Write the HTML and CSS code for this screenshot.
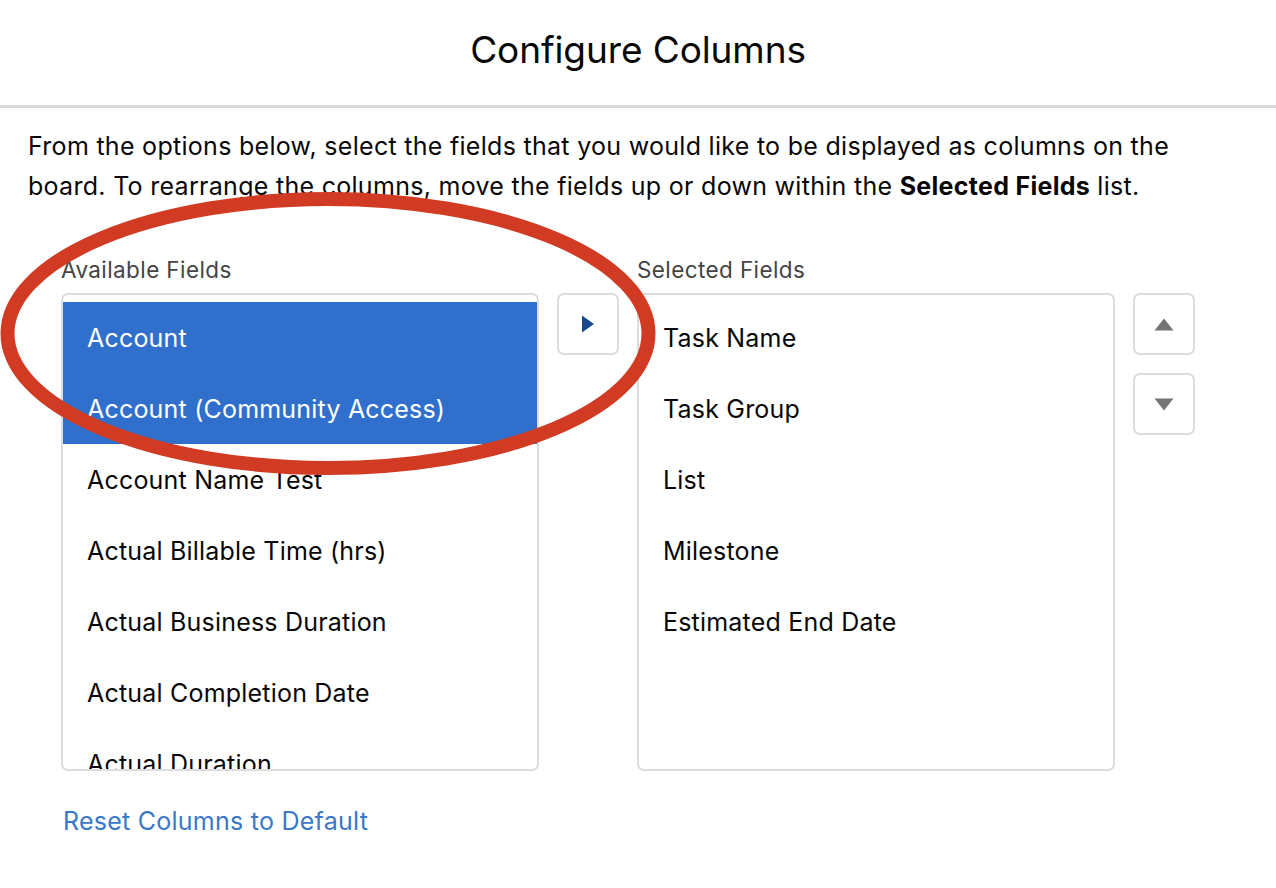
FILE: index.html
```html
<!DOCTYPE html>
<html lang="en">
<head>
<meta charset="utf-8">
<title>Configure Columns</title>
<link rel="stylesheet" href="styles.css">
</head>
<body>
<div class="modal">
  <header class="modal-header">
    <h1 class="modal-title">Configure Columns</h1>
  </header>
  <div class="modal-body">
    <p class="intro">From the options below, select the fields that you would like to be displayed as columns on the board. To rearrange the columns, move the fields up or down within the <strong>Selected Fields</strong> list.</p>
    <div class="dual">
      <div class="col">
        <div class="col-label">Available Fields</div>
        <ul class="listbox">
          <li class="opt selected">Account</li>
          <li class="opt selected">Account (Community Access)</li>
          <li class="opt">Account Name Test</li>
          <li class="opt">Actual Billable Time (hrs)</li>
          <li class="opt">Actual Business Duration</li>
          <li class="opt">Actual Completion Date</li>
          <li class="opt">Actual Duration</li>
          <li class="opt">Actual End Date</li>
        </ul>
      </div>
      <div class="btns">
        <button class="icon-btn" aria-label="Move to Selected">
          <svg width="14" height="18" viewBox="0 0 14 18"><path d="M1 0.5 L13 9 L1 17.5 Z" fill="#1b4a8c"/></svg>
        </button>
      </div>
      <div class="col">
        <div class="col-label">Selected Fields</div>
        <ul class="listbox">
          <li class="opt">Task Name</li>
          <li class="opt">Task Group</li>
          <li class="opt">List</li>
          <li class="opt">Milestone</li>
          <li class="opt">Estimated End Date</li>
        </ul>
      </div>
      <div class="btns">
        <button class="icon-btn" aria-label="Move up">
          <svg width="20" height="13" viewBox="0 0 20 13"><path d="M10 0.5 L19.5 12.5 L0.5 12.5 Z" fill="#747474"/></svg>
        </button>
        <button class="icon-btn" aria-label="Move down">
          <svg width="20" height="13" viewBox="0 0 20 13"><path d="M0.5 0.5 L19.5 0.5 L10 12.5 Z" fill="#747474"/></svg>
        </button>
      </div>
    </div>
    <a class="reset" href="#">Reset Columns to Default</a>
  </div>
  <svg class="annotation" width="680" height="320" viewBox="0 0 680 320" aria-hidden="true">
    <ellipse cx="328" cy="148.5" rx="320.5" ry="134.5" fill="none" stroke="#d13b24" stroke-width="14"/>
  </svg>
</div>
</body>
</html>
```

FILE: styles.css
```css
* { box-sizing: border-box; }
html, body { margin: 0; padding: 0; background: #fff; }
body {
  font-family: Inter, "Helvetica Neue", "Liberation Sans", Arial, sans-serif;
  color: #080707;
}
.modal { position: relative; width: 1276px; height: 888px; overflow: hidden; }
.modal-header {
  height: 108px;
  border-bottom: 3px solid #d9d9d9;
  display: flex;
  align-items: center;
  justify-content: center;
  padding-bottom: 6px;
}
.modal-title {
  margin: 0;
  font-size: 37px;
  font-weight: 400;
  letter-spacing: -0.1px;
  color: #080707;
}
.modal-body { padding: 18px 28px 0 28px; }
.intro {
  margin: 0;
  max-width: 1200px;
  font-size: 25px;
  line-height: 40px;
  letter-spacing: 0.29px;
}
.intro strong { font-weight: 700; }
.dual {
  display: flex;
  align-items: flex-start;
  gap: 18px;
  margin-top: 50px;
  padding-left: 33px;
}
.col { width: 478px; }
.col-label {
  font-size: 22.5px;
  line-height: 28px;
  color: #444;
  margin-bottom: 9px;
  letter-spacing: 0.4px;
}
.listbox {
  list-style: none;
  margin: 0;
  padding: 7px 0 0 0;
  height: 478px;
  overflow: hidden;
  border: 2px solid #dcdcdc;
  border-radius: 7px;
}
.opt {
  height: 71px;
  display: flex;
  align-items: center;
  padding-left: 24px;
  font-size: 25px;
  letter-spacing: 0.2px;
  color: #080707;
  white-space: nowrap;
}
.opt.selected { background: #3070cc; color: #fff; }
.btns {
  display: flex;
  flex-direction: column;
  gap: 18px;
  padding-top: 37px;
}
.icon-btn {
  width: 62px;
  height: 62px;
  border: 2px solid #dcdcdc;
  border-radius: 7px;
  background: #fff;
  display: flex;
  align-items: center;
  justify-content: center;
  padding: 0;
}
.reset {
  display: inline-block;
  margin-top: 34px;
  margin-left: 35px;
  font-size: 25px;
  line-height: 32px;
  color: #3a78c8;
  text-decoration: none;
  letter-spacing: 0.25px;
}
.annotation {
  position: absolute;
  left: 0;
  top: 185px;
  pointer-events: none;
}
```
